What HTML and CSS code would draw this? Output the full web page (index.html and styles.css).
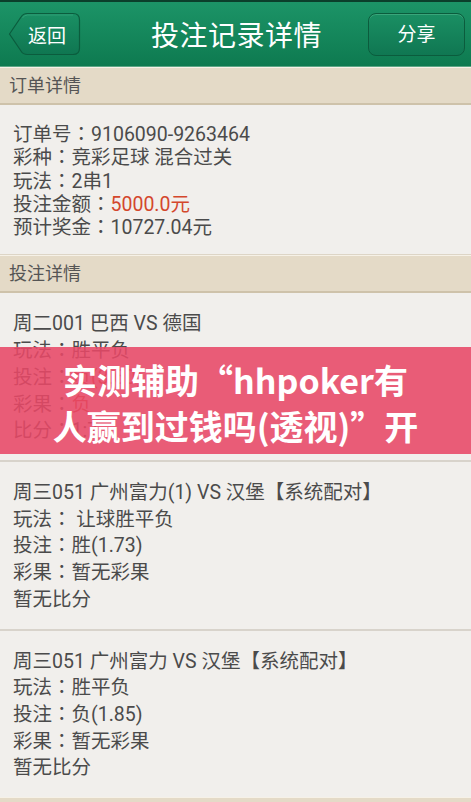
FILE: index.html
```html
<!DOCTYPE html>
<html lang="zh-CN">
<head>
    <meta charset="UTF-8">
    <meta name="viewport" content="width=device-width, initial-scale=1.0">
    <title>投注记录详情</title>
    <link rel="stylesheet" href="styles.css">
</head>
<body>
    <div class="app">
        <header class="topbar">
            <a class="btn-back">
                <svg class="btn-back-shape" width="73" height="44" viewBox="0 0 73 44">
                    <defs>
                        <linearGradient id="backFill" x1="0" y1="0" x2="0" y2="1">
                            <stop offset="0" stop-color="#1a9064"/>
                            <stop offset="1" stop-color="#0f7651"/>
                        </linearGradient>
                    </defs>
                    <path d="M1.5 22 L13 5 Q15 1.5 19.5 1.5 L65 1.5 Q71.5 1.5 71.5 8 L71.5 36 Q71.5 42.5 65 42.5 L19.5 42.5 Q15 42.5 13 39 Z" fill="url(#backFill)" stroke="#0b5c3d" stroke-width="1.2"/>
                    <path d="M14.5 6 Q16 3 19.5 3 L65 3" fill="none" stroke="#3aa77d" stroke-width="1" opacity="0.7"/>
                </svg>
                <span>返回</span>
            </a>
            <h1 class="title">投注记录详情</h1>
            <a class="btn-share">分享</a>
        </header>

        <div class="section-title">订单详情</div>
        <div class="order-info">
            <p>订单号<span class="colon" lang="zh-TW">：</span>9106090-9263464</p>
            <p>彩种<span class="colon" lang="zh-TW">：</span>竞彩足球 混合过关</p>
            <p>玩法<span class="colon" lang="zh-TW">：</span>2串1</p>
            <p>投注金额<span class="colon" lang="zh-TW">：</span><span class="money">5000.0元</span></p>
            <p>预计奖金<span class="colon" lang="zh-TW">：</span>10727.04元</p>
        </div>

        <div class="section-title">投注详情</div>
        <div class="bets">
            <div class="bet">
                <p>周二001 巴西 VS 德国</p>
                <p>玩法<span class="colon" lang="zh-TW">：</span>胜平负</p>
                <p>投注<span class="colon" lang="zh-TW">：</span><span class="hit">负(3.60)</span></p>
                <p>彩果<span class="colon" lang="zh-TW">：</span><span class="hit">负</span></p>
                <p>比分<span class="colon" lang="zh-TW">：</span>1:7</p>
            </div>
            <div class="bet">
                <p>周三051 广州富力(1) VS 汉堡【系统配对】</p>
                <p>玩法<span class="colon" lang="zh-TW">：</span> 让球胜平负</p>
                <p>投注<span class="colon" lang="zh-TW">：</span>胜(1.73)</p>
                <p>彩果<span class="colon" lang="zh-TW">：</span>暂无彩果</p>
                <p>暂无比分</p>
            </div>
            <div class="bet">
                <p>周三051 广州富力 VS 汉堡【系统配对】</p>
                <p>玩法<span class="colon" lang="zh-TW">：</span>胜平负</p>
                <p>投注<span class="colon" lang="zh-TW">：</span>负(1.85)</p>
                <p>彩果<span class="colon" lang="zh-TW">：</span>暂无彩果</p>
                <p>暂无比分</p>
            </div>
        </div>
        <div class="section-title"></div>

        <div class="banner">实测辅助“hhpoker有人赢到过钱吗(透视)”开挂教程</div>
    </div>
</body>
</html>
```

FILE: styles.css
```css
body {
    margin: 0;
    font-family: Roboto, "Noto Sans CJK SC", sans-serif;
    background-color: #f1efec;
    color: #4b4b4b;
}

.app {
    position: relative;
    width: 471px;
    height: 802px;
    overflow: hidden;
    background: #f1efec;
}

p {
    margin: 0;
}

/* top green bar */
.topbar {
    display: grid;
    grid-template-columns: 1fr auto 1fr;
    align-items: center;
    height: 64px;
    padding: 0 6px 0 8px;
    border-top: 2px solid #0b3f2b;
    border-bottom: 1px solid #5da685;
    background: linear-gradient(#1c9467, #0e7a50);
}

.title {
    margin: 0;
    color: #ffffff;
    font-size: 28px;
    font-weight: normal;
    letter-spacing: 0.5px;
}

.btn-back {
    justify-self: start;
    position: relative;
    display: flex;
    align-items: center;
    width: 73px;
    height: 44px;
    color: #ffffff;
    font-size: 19px;
}

.btn-back-shape {
    position: absolute;
    left: 0;
    top: 0;
}

.btn-back span {
    position: relative;
    margin-left: 20px;
}

.btn-share {
    justify-self: end;
    width: 95px;
    height: 41px;
    line-height: 41px;
    text-align: center;
    color: #ffffff;
    font-size: 19px;
    border: 1px solid #0b5c3d;
    border-radius: 8px;
    background: linear-gradient(#1a8f63, #107752);
    box-shadow: inset 0 1px 0 rgba(120, 210, 170, 0.35);
}

/* beige section headers */
.section-title {
    height: 35px;
    line-height: 35px;
    padding-left: 9px;
    font-size: 18px;
    color: #555555;
    background: #e4dac7;
    border-top: 1px solid #f6f1e7;
    border-bottom: 2px solid #cec2aa;
}

.order-info {
    padding: 18px 13px 15px;
    font-size: 19.5px;
    line-height: 23.3px;
    border-bottom: 1px solid #ddd5c6;
}

/* android style centred full-width colon */
.colon {
    font-family: "Noto Sans CJK TC", sans-serif;
    line-height: 0;
}

.money {
    color: #d4472c;
}

.bet {
    padding: 18px 13px 15px;
    font-size: 19.5px;
    line-height: 26.7px;
    border-bottom: 2px solid #d8d3cb;
}

.bet:last-child {
    border-bottom: none;
}

.hit {
    color: #d4472c;
}

/* pink overlay banner */
.banner {
    position: absolute;
    top: 347px;
    left: 0;
    right: 0;
    height: 97px;
    padding: 10px 47px 0;
    overflow: hidden;
    background: rgba(231, 72, 102, 0.88);
    color: #ffffff;
    font-family: "Noto Sans CJK SC", sans-serif;
    font-size: 34px;
    font-weight: bold;
    line-height: 46px;
    text-align: center;
}
```
